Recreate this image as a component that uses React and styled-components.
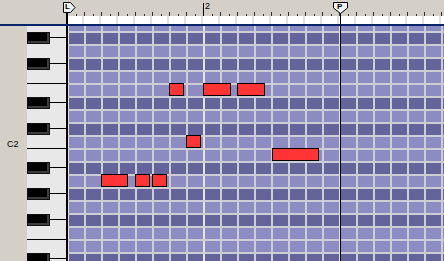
import React from "react";
import styled, { createGlobalStyle } from "styled-components";

const FACE = "#d4d0c8";
const LINE = "#cdcdd6";
const BARLINE = "#e4e4ea";
const DARK = "#64649a";
const LIGHT = "#8c8cc3";
const COL = 17;
const ROW = 13;

const GlobalStyle = createGlobalStyle`
  html, body { margin: 0; padding: 0; background: ${FACE}; }
  body { font-family: "Liberation Sans", Arial, sans-serif; }
`;

// top row is only partly visible
const NAMES = ["A", "G#", "G", "F#", "F", "E", "D#", "D", "C#", "C", "B", "A#", "A", "G#", "G", "F#", "F", "E", "D#"];

const NOTES = {
  5: [{ x: 101, w: 15 }, { x: 135, w: 28 }, { x: 169, w: 28 }],
  9: [{ x: 118, w: 15 }],
  10: [{ x: 204, w: 47 }],
  12: [{ x: 33, w: 27 }, { x: 67, w: 15 }, { x: 84, w: 15 }],
};

const keys = NAMES.map((name, i) => ({
  name,
  black: name.includes("#"),
  partial: i === 0,
  split: !i ? false : name === "E" || name === "B",
  label: i === 9 ? "C2" : null,
  notes: NOTES[i] || [],
}));

function App() {
  return (
    <>
      <GlobalStyle />
      <Screen>
        <Ruler />
        <StripRow>
          <StripGap />
          <Strip />
        </StripRow>
        <Navy />
        <Roll>
          {keys.map((k, i) => (
            <KeyRow key={i} $h={k.partial ? 5 : ROW}>
              <Label>{k.label}</Label>
              <PianoKey $split={k.split}>
                {k.black && (
                  <>
                    <BlackKey />
                    <Seam />
                  </>
                )}
              </PianoKey>
              <Lane $dark={k.black} $partial={k.partial}>
                {k.notes.map((n, j) => (
                  <Note key={j} style={{ left: n.x, width: n.w }} />
                ))}
              </Lane>
            </KeyRow>
          ))}
        </Roll>
        <PlayLine />
      </Screen>
    </>
  );
}

function Ruler() {
  const ticks = [];
  for (let k = 0; k < 23; k++) {
    const x = 67 + k * COL;
    if (k > 0) ticks.push(<rect key={"t" + k} x={x} y={12} width={1} height={4} fill="#303030" />);
    ticks.push(<rect key={"d" + k} x={x + 9} y={14} width={1} height={2} fill="#303030" />);
  }
  return (
    <Scale>
      <svg width="444" height="16" viewBox="0 0 444 16">
        {ticks}
        <rect x={203} y={3} width={1} height={13} fill="#000" />
        <rect x={66} y={12} width={2} height={4} fill="#000" />
        <path d="M63.5 2.5 H70.5 L75 7.5 L70.5 12.5 H63.5 Z" fill="#f2f2f2" stroke="#000" />
        <rect x={340} y={12} width={1} height={4} fill="#000" />
        <path d="M333.5 2.5 H347.5 V8 L340.5 13.5 L333.5 8 Z" fill="#f2f2f2" stroke="#000" />
      </svg>
      <BarNum>2</BarNum>
      <MarkLetter $x={65}>L</MarkLetter>
      <MarkLetter $x={337}>P</MarkLetter>
    </Scale>
  );
}

export default App;

const Screen = styled.div`
  position: relative;
  width: 444px;
  height: 261px;
  overflow: hidden;
  background: ${FACE};
  display: flex;
  flex-direction: column;
`;

const Scale = styled.div`
  position: relative;
  height: 16px;
  flex: none;
  svg { display: block; }
`;

const BarNum = styled.span`
  position: absolute;
  left: 205px;
  top: 2px;
  font-size: 9px;
  line-height: 9px;
  color: #000;
`;

const MarkLetter = styled.span`
  position: absolute;
  left: ${(p) => p.$x}px;
  top: 2px;
  font-size: 8px;
  line-height: 9px;
  font-weight: bold;
  color: #000;
`;

const StripRow = styled.div`
  display: flex;
  height: 8px;
  flex: none;
`;

const StripGap = styled.div`
  width: 66px;
  background: ${FACE};
`;

const Strip = styled.div`
  flex: 1;
  background-color: #fff;
  border-left: 2px solid #000;
  background-image: linear-gradient(90deg, #e2e2e6 0 2px, transparent 2px);
  background-size: ${COL}px 100%;
  background-position: 14px 0;
`;

const Navy = styled.div`
  height: 2px;
  flex: none;
  background: #0a246a;
`;

const Roll = styled.div`
  display: flex;
  flex-direction: column;
`;

const KeyRow = styled.div`
  display: flex;
  height: ${(p) => p.$h}px;
  flex: none;
`;

const Label = styled.div`
  width: 27px;
  flex: none;
  box-sizing: border-box;
  padding-left: 7px;
  display: flex;
  align-items: flex-end;
  font-size: 9px;
  line-height: 8px;
  color: #000;
`;

const PianoKey = styled.div`
  width: 41px;
  flex: none;
  box-sizing: border-box;
  background: #e8e8e8;
  border-right: 2px solid #000;
  border-top: ${(p) => (p.$split ? "1px solid #000" : "none")};
  display: flex;
  align-items: center;
`;

const BlackKey = styled.div`
  width: 23px;
  height: 12px;
  box-sizing: border-box;
  background: #000;
  border: 1px solid #111;
  box-shadow: inset -2px -2px 0 #3c3c3c;
`;

const Seam = styled.div`
  flex: 1;
  height: 1px;
  background: #000;
`;

const Lane = styled.div`
  position: relative;
  flex: 1;
  box-sizing: border-box;
  border-top: ${(p) => (p.$partial ? "none" : `2px solid ${LINE}`)};
  background-color: ${(p) => (p.$dark ? DARK : LIGHT)};
  background-image: linear-gradient(90deg, ${BARLINE} 0 2px, transparent 2px),
    linear-gradient(90deg, ${LINE} 0 2px, transparent 2px);
  background-size: ${COL * 8}px 100%, ${COL}px 100%;
  background-position: ${COL * 8 - 1}px 0, 16px 0;
`;

const Note = styled.div`
  position: absolute;
  top: -2px;
  height: 13px;
  box-sizing: border-box;
  background: #ff3434;
  border: 1px solid #000;
  z-index: 1;
`;

const PlayLine = styled.div`
  position: absolute;
  left: 340px;
  top: 13px;
  bottom: 0;
  width: 1px;
  background: #000;
  z-index: 2;
`;
